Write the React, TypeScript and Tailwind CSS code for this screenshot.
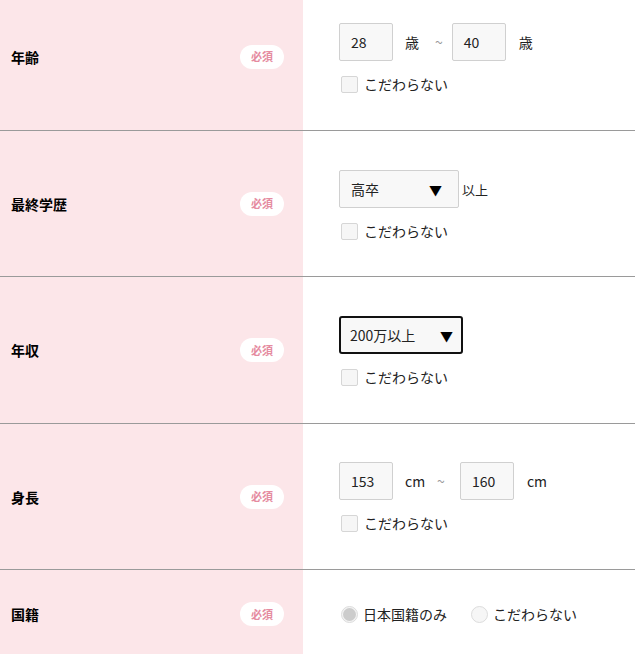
const font = { fontFamily: '"Noto Sans CJK JP", "Liberation Sans", sans-serif' }

function Badge() {
  return (
    <span className="flex h-[24px] w-[44px] items-center justify-center rounded-full bg-white text-[11px] font-bold leading-none text-[#e58ba0]">
      必須
    </span>
  )
}

function Label({ text }: { text: string }) {
  return (
    <div className="flex w-[303px] shrink-0 items-center justify-between bg-[#fce6e9] pl-[11px] pr-[19px]">
      <span className="text-[14px] font-bold leading-none text-black">{text}</span>
      <Badge />
    </div>
  )
}

function NumBox({ value }: { value: string }) {
  return (
    <div className="flex h-[38px] w-[54px] items-center rounded-[2px] border border-[#d0d0d0] bg-[#f8f8f8] pl-[11px] text-[14px] leading-none text-[#222]">
      {value}
    </div>
  )
}

function Check() {
  return (
    <div className="mt-[13px] flex h-[20px] items-center leading-none">
      <span className="ml-[2px] h-[17px] w-[17px] rounded-[2px] border border-[#d6d6d6] bg-[#f6f6f6]" />
      <span className="ml-[6px] text-[14px] text-[#222]">こだわらない</span>
    </div>
  )
}

function Row({
  label,
  children,
  pad,
  last,
}: {
  label: string
  children: React.ReactNode
  pad: string
  last?: boolean
}) {
  return (
    <div className={`flex ${last ? '' : 'border-b border-[#9a9a9a]'}`}>
      <Label text={label} />
      <div className={`flex-1 bg-white pl-[36px] ${pad}`}>{children}</div>
    </div>
  )
}

export default function App() {
  return (
    <div className="h-[654px] w-[635px] overflow-hidden bg-white" style={font}>
      <div className="-mt-[17px]">
        <Row label="年齢" pad="pt-[40px] pb-[36px]">
          <div className="flex h-[38px] items-center leading-none">
            <NumBox value="28" />
            <span className="ml-[12px] text-[14px] text-[#222]">歳</span>
            <span className="ml-[16px] text-[14px] text-[#999]">~</span>
            <div className="ml-[9px]">
              <NumBox value="40" />
            </div>
            <span className="ml-[13px] text-[14px] text-[#222]">歳</span>
          </div>
          <Check />
        </Row>

        <Row label="最終学歴" pad="pt-[39px] pb-[35px]">
          <div className="flex h-[38px] items-center leading-none">
            <div className="flex h-[38px] w-[120px] items-center justify-between rounded-[2px] border border-[#d0d0d0] bg-[#f8f8f8] pl-[11px] pr-[16px] text-[14px] text-[#222]">
              <span>高卒</span>
              <span className="text-[13px] text-black">▼</span>
            </div>
            <span className="ml-[3px] text-[13px] text-[#222]">以上</span>
          </div>
          <Check />
        </Row>

        <Row label="年収" pad="pt-[39px] pb-[36px]">
          <div className="flex h-[38px] items-center leading-none">
            <div className="flex h-[38px] w-[124px] items-center justify-between rounded-[3px] border-2 border-[#111] bg-[#f8f8f8] pl-[9px] pr-[8px] text-[14px] text-[#222]">
              <span>200万以上</span>
              <span className="text-[13px] text-black">▼</span>
            </div>
          </div>
          <Check />
        </Row>

        <Row label="身長" pad="pt-[38px] pb-[36px]">
          <div className="flex h-[38px] items-center leading-none">
            <NumBox value="153" />
            <span className="ml-[12px] text-[14px] text-[#222]">cm</span>
            <span className="ml-[12px] text-[14px] text-[#999]">~</span>
            <div className="ml-[15px]">
              <NumBox value="160" />
            </div>
            <span className="ml-[13px] text-[14px] text-[#222]">cm</span>
          </div>
          <Check />
        </Row>

        <Row label="国籍" pad="py-[34px]" last>
          <div className="flex h-[20px] items-center leading-none">
            <span className="ml-[2px] flex h-[17px] w-[17px] items-center justify-center rounded-full border border-[#dcdcdc] bg-[#f4f4f4]">
              <span className="h-[13px] w-[13px] rounded-full bg-[#cccccc]" />
            </span>
            <span className="ml-[5px] text-[14px] text-[#222]">日本国籍のみ</span>
            <span className="ml-[24px] h-[17px] w-[17px] rounded-full border border-[#dcdcdc] bg-[#f6f6f6]" />
            <span className="ml-[5px] text-[14px] text-[#222]">こだわらない</span>
          </div>
        </Row>
      </div>
    </div>
  )
}
